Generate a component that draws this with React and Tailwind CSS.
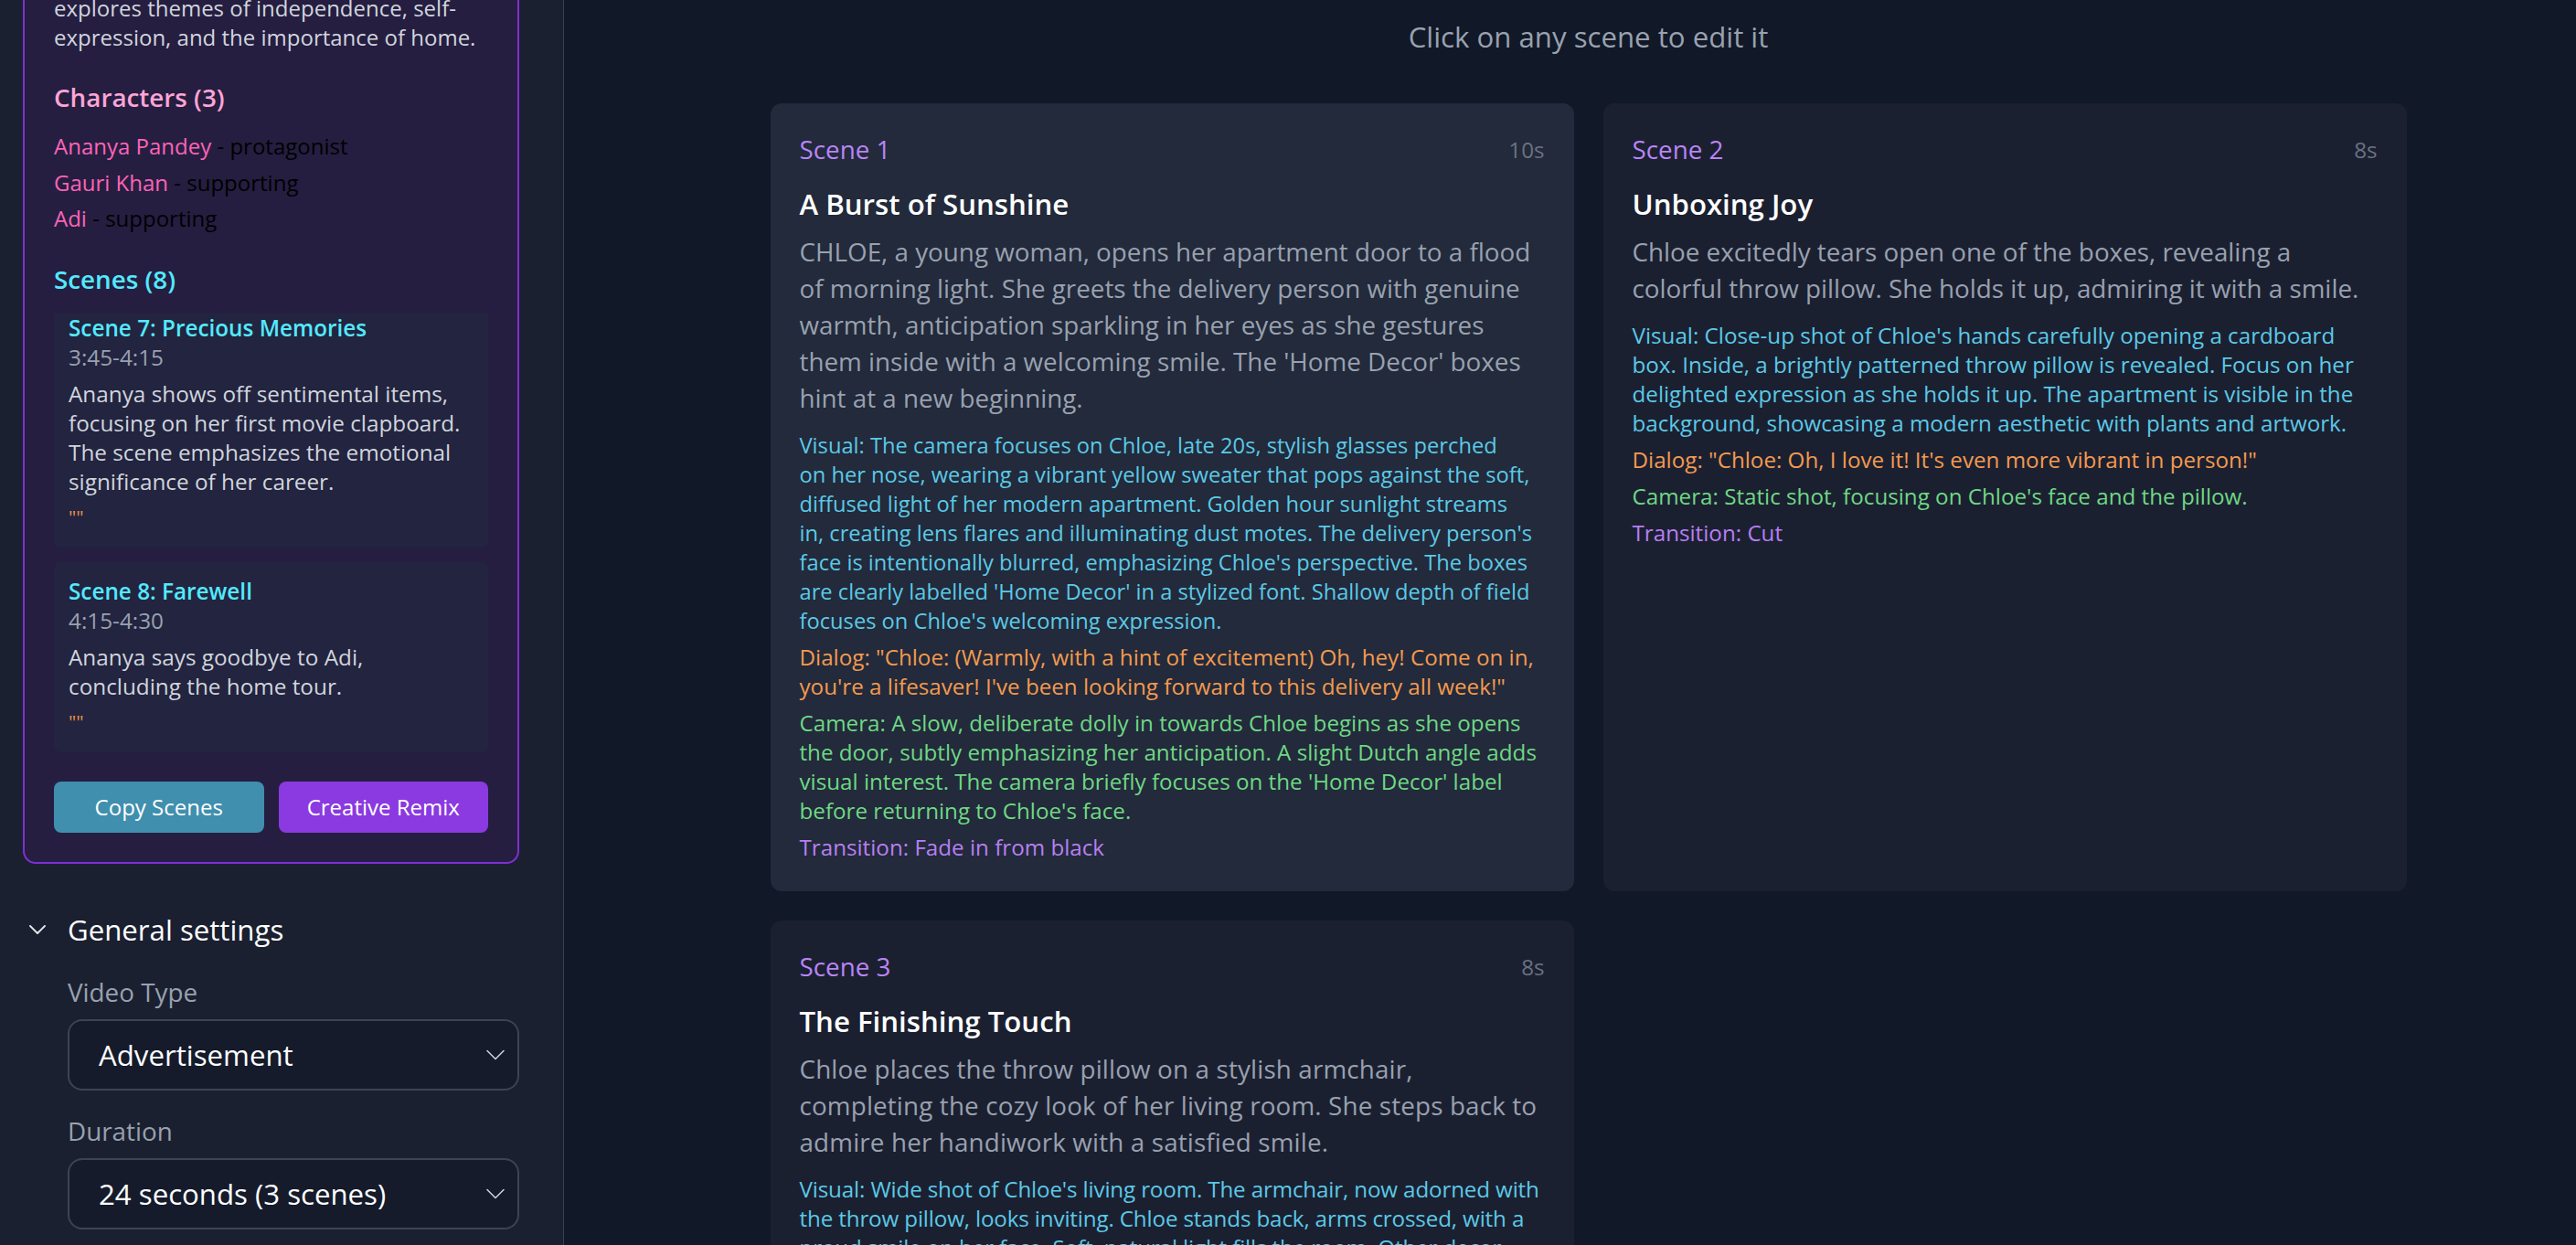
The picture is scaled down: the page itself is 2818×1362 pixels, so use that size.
import { Fragment } from "react";
import { ChevronDown } from "lucide-react";

const scenes = [
  {
    n: 1,
    dur: "10s",
    title: "A Burst of Sunshine",
    desc: "CHLOE, a young woman, opens her apartment door to a flood of morning light. She greets the delivery person with genuine warmth, anticipation sparkling in her eyes as she gestures them inside with a welcoming smile. The 'Home Decor' boxes hint at a new beginning.",
    // kept as lines so the wrap matches the original font
    visualClass: "text-[23.7px]",
    visual: [
      "The camera focuses on Chloe, late 20s, stylish glasses perched",
      "on her nose, wearing a vibrant yellow sweater that pops against the soft, diffused light of her modern apartment. Golden hour sunlight streams",
      "in, creating lens flares and illuminating dust motes. The delivery person's face is intentionally blurred, emphasizing Chloe's perspective. The boxes are clearly labelled 'Home Decor' in a stylized font. Shallow depth of field focuses on Chloe's welcoming expression.",
    ],
    dialog:
      "\"Chloe: (Warmly, with a hint of excitement) Oh, hey! Come on in, you're a lifesaver! I've been looking forward to this delivery all week!\"",
    camera:
      "A slow, deliberate dolly in towards Chloe begins as she opens the door, subtly emphasizing her anticipation. A slight Dutch angle adds visual interest. The camera briefly focuses on the 'Home Decor' label before returning to Chloe's face.",
    transition: "Fade in from black",
  },
  {
    n: 2,
    dur: "8s",
    title: "Unboxing Joy",
    desc: "Chloe excitedly tears open one of the boxes, revealing a colorful throw pillow. She holds it up, admiring it with a smile.",
    visual:
      "Close-up shot of Chloe's hands carefully opening a cardboard box. Inside, a brightly patterned throw pillow is revealed. Focus on her delighted expression as she holds it up. The apartment is visible in the background, showcasing a modern aesthetic with plants and artwork.",
    dialog: "\"Chloe: Oh, I love it! It's even more vibrant in person!\"",
    camera: "Static shot, focusing on Chloe's face and the pillow.",
    transition: "Cut",
  },
  {
    n: 3,
    dur: "8s",
    title: "The Finishing Touch",
    descClass: "tracking-[0.15px]",
    desc: "Chloe places the throw pillow on a stylish armchair, completing the cozy look of her living room. She steps back to admire her handiwork with a satisfied smile.",
    visualClass: "tracking-[-0.15px]",
    visual:
      "Wide shot of Chloe's living room. The armchair, now adorned with the throw pillow, looks inviting. Chloe stands back, arms crossed, with a proud smile on her face. Soft, natural light fills the room. Other decor pieces complete the warm, lived-in feel.",
    dialog: "\"Chloe: Perfect. Now it finally feels like home.\"",
    camera: "Slow pull back to reveal the whole room.",
    transition: "Fade to white",
  },
];

const characters = [
  { name: "Ananya Pandey", role: "protagonist" },
  { name: "Gauri Khan", role: "supporting" },
  { name: "Adi", role: "supporting" },
];

const sideScenes = [
  {
    title: "Scene 7: Precious Memories",
    time: "3:45-4:15",
    desc: "Ananya shows off sentimental items, focusing on her first movie clapboard. The scene emphasizes the emotional significance of her career.",
  },
  {
    title: "Scene 8: Farewell",
    time: "4:15-4:30",
    desc: "Ananya says goodbye to Adi, concluding the home tour.",
  },
];

function Lines({ text }) {
  if (!Array.isArray(text)) return text;
  return text.map((t, i) => (
    <Fragment key={i}>
      {i > 0 && <br />}
      {t}
    </Fragment>
  ));
}

function SceneCard({ scene, active }) {
  return (
    <div className={`rounded-xl p-8 ${active ? "bg-[#222a3b]" : "bg-[#1b2031]"}`}>
      <div className="flex h-[38px] items-center justify-between">
        <span className="text-[27.8px] text-[#b985f5]">Scene {scene.n}</span>
        <span className="text-[24.2px] text-gray-500">{scene.dur}</span>
      </div>
      <h3 className="mt-[18px] text-[31.2px] font-semibold leading-[44px] text-white">{scene.title}</h3>
      <p className={`mt-[10px] text-[27.8px] leading-[40px] text-gray-400 ${scene.descClass || ""}`}>{scene.desc}</p>
      <div className="mt-4 flex flex-col gap-2 text-[24.2px] leading-[32px]">
        <p className={`text-[#5cc9e6] ${scene.visualClass || ""}`}>
          Visual: <Lines text={scene.visual} />
        </p>
        <p className="text-[#f39a4f]">Dialog: {scene.dialog}</p>
        <p className="text-[#6fd884]">Camera: {scene.camera}</p>
        <p className="text-[#b87ff2]">Transition: {scene.transition}</p>
      </div>
    </div>
  );
}

function SelectBox({ value }) {
  return (
    <div className="flex h-[78px] items-center justify-between rounded-2xl border-2 border-[#3b4454] bg-[#151b2b] pl-8 pr-[6px]">
      <span className="text-[31.2px] leading-[44px] text-white">{value}</span>
      <ChevronDown size={36} strokeWidth={1} className="text-gray-300" />
    </div>
  );
}

export default function App() {
  return (
    <div className="flex h-[1362px] w-full overflow-hidden font-['Open_Sans',sans-serif]">
      {/* sidebar, scrolled down */}
      <aside className="w-[617px] shrink-0 overflow-hidden border-r border-gray-700 bg-[#1a2030] pl-[25px] pr-[48px]">
        <div className="-mt-[41px] rounded-[14px] border-2 border-[#7e2fd3] bg-[#251e41] px-8 pb-8 pt-8">
          <p className="text-[24px] leading-[32px] text-gray-300">
            explores themes of independence, self-expression, and the importance of home.
          </p>

          <h4 className="mt-[30px] text-[27.8px] font-semibold leading-[38px] text-pink-300">
            Characters (3)
          </h4>
          <div className="mt-[19px] flex flex-col gap-[7.5px] text-[24px] leading-[32px]">
            {characters.map((c) => (
              <div key={c.name}>
                <span className="text-pink-400">{c.name}</span>
                <span className="text-black"> - {c.role}</span>
              </div>
            ))}
          </div>

          <h4 className="mt-[31px] text-[27.8px] font-semibold leading-[38px] text-cyan-300">Scenes (8)</h4>
          {/* list is scrolled to the bottom */}
          <div className="mt-[19px] flex h-[480px] flex-col justify-end gap-4 overflow-hidden">
            {sideScenes.map((s) => (
              <div key={s.title} className="shrink-0 rounded-lg bg-[#222440] px-4 pb-[19px] pt-4 text-[24.3px] leading-[32px]">
                <div className="font-semibold text-cyan-300">{s.title}</div>
                <div className="text-gray-400">{s.time}</div>
                <p className="mt-2 text-gray-300">{s.desc}</p>
                <div className="mt-2 text-[20.8px] leading-[29px] text-[#e8904a]">""</div>
              </div>
            ))}
          </div>

          <div className="mt-8 flex gap-4">
            <button className="h-[56px] flex-1 rounded-lg bg-[#408fae] text-[24px] font-medium text-white">
              Copy Scenes
            </button>
            <button className="h-[56px] flex-1 rounded-lg bg-[#8a3ae0] text-[24px] font-medium text-white">
              Creative Remix
            </button>
          </div>
        </div>

        <div className="mt-[50px] flex h-[44px] items-center">
          <ChevronDown size={32} strokeWidth={1.4} className="text-gray-200" />
          <span className="ml-[17px] text-[31.2px] font-medium text-white">General settings</span>
        </div>

        <div className="pl-[49px]">
          <div className="mt-[27px] text-[27.8px] leading-[38px] text-gray-400">Video Type</div>
          <div className="mt-[11px]">
            <SelectBox value="Advertisement" />
          </div>
          <div className="mt-[25px] text-[27.8px] leading-[38px] text-gray-400">Duration</div>
          <div className="mt-[11px]">
            <SelectBox value="24 seconds (3 scenes)" />
          </div>
        </div>
      </aside>

      {/* main */}
      <main className="flex-1 overflow-hidden bg-[#111827] pl-10 pt-[18px]">
        <p className="text-center text-[31.2px] leading-[44px] text-gray-400">Click on any scene to edit it</p>
        <div className="mx-auto mt-[51px] grid w-[1790px] grid-cols-2 items-stretch gap-8">
          {scenes.map((s, i) => (
            <SceneCard key={s.n} scene={s} active={i === 0} />
          ))}
        </div>
      </main>
    </div>
  );
}
